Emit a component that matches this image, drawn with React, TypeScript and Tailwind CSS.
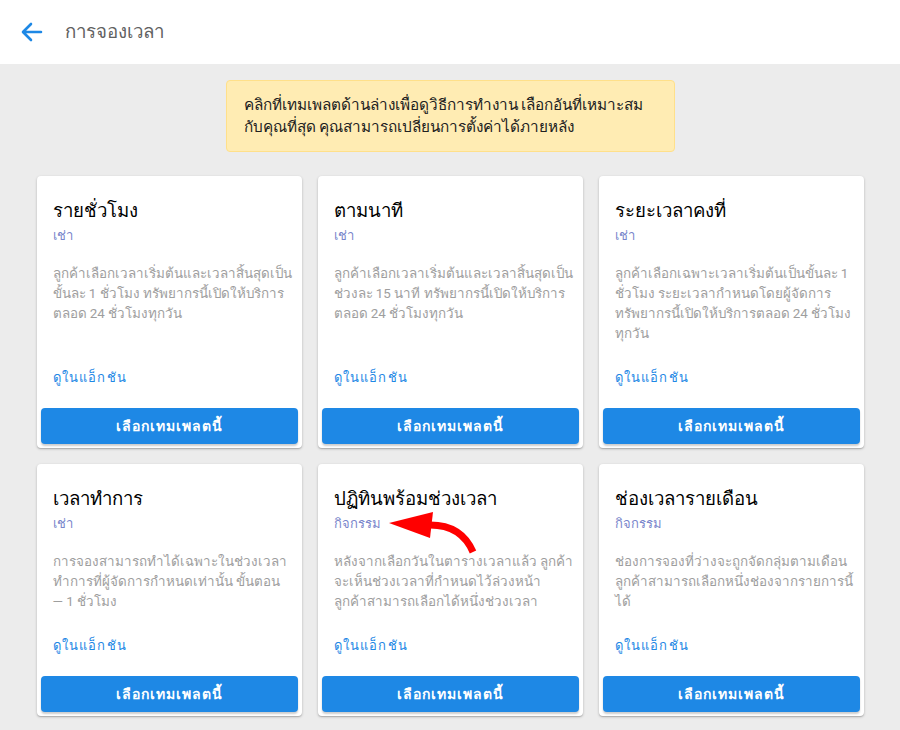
import React from 'react'

type Template = {
  title: string
  kind: string
  lines: string[]
  arrow?: boolean
}

const templates: Template[] = [
  {
    title: 'รายชั่วโมง',
    kind: 'เช่า',
    lines: [
      'ลูกค้าเลือกเวลาเริ่มต้นและเวลาสิ้นสุดเป็น',
      'ขั้นละ 1 ชั่วโมง ทรัพยากรนี้เปิดให้บริการ',
      'ตลอด 24 ชั่วโมงทุกวัน',
    ],
  },
  {
    title: 'ตามนาที',
    kind: 'เช่า',
    lines: [
      'ลูกค้าเลือกเวลาเริ่มต้นและเวลาสิ้นสุดเป็น',
      'ช่วงละ 15 นาที ทรัพยากรนี้เปิดให้บริการ',
      'ตลอด 24 ชั่วโมงทุกวัน',
    ],
  },
  {
    title: 'ระยะเวลาคงที่',
    kind: 'เช่า',
    lines: [
      'ลูกค้าเลือกเฉพาะเวลาเริ่มต้นเป็นขั้นละ 1',
      'ชั่วโมง ระยะเวลากำหนดโดยผู้จัดการ',
      'ทรัพยากรนี้เปิดให้บริการตลอด 24 ชั่วโมง',
      'ทุกวัน',
    ],
  },
  {
    title: 'เวลาทำการ',
    kind: 'เช่า',
    lines: [
      'การจองสามารถทำได้เฉพาะในช่วงเวลา',
      'ทำการที่ผู้จัดการกำหนดเท่านั้น ขั้นตอน',
      '— 1 ชั่วโมง',
    ],
  },
  {
    title: 'ปฏิทินพร้อมช่วงเวลา',
    kind: 'กิจกรรม',
    lines: [
      'หลังจากเลือกวันในตารางเวลาแล้ว ลูกค้า',
      'จะเห็นช่วงเวลาที่กำหนดไว้ล่วงหน้า',
      'ลูกค้าสามารถเลือกได้หนึ่งช่วงเวลา',
    ],
    arrow: true,
  },
  {
    title: 'ช่องเวลารายเดือน',
    kind: 'กิจกรรม',
    lines: [
      'ช่องการจองที่ว่างจะถูกจัดกลุ่มตามเดือน',
      'ลูกค้าสามารถเลือกหนึ่งช่องจากรายการนี้',
      'ได้',
    ],
  },
]

function RedArrow() {
  return (
    <svg
      className="absolute left-0 top-0 pointer-events-none"
      width="200"
      height="120"
      viewBox="0 0 200 120"
    >
      <path d="M 155 88 Q 143 60 110 61" fill="none" stroke="#ff0000" strokeWidth="7" />
      <polygon points="71,59 115,48 112,74" fill="#ff0000" />
    </svg>
  )
}

function TemplateCard({ t }: { t: Template }) {
  return (
    <div className="relative bg-white rounded shadow-[0_1px_3px_rgba(0,0,0,0.2),0_1px_1px_rgba(0,0,0,0.14)] flex flex-col">
      <div className="px-4 pt-[21px] flex-1 flex flex-col">
        <h2 className="text-[18.6px] leading-7 font-medium text-black">{t.title}</h2>
        <div className="mt-px text-[13px] leading-5 text-[#7986cb]">{t.kind}</div>
        <p className="mt-[18px] text-[13.4px] leading-5 text-[#9e9e9e] whitespace-nowrap">
          {t.lines.map((l, i) => (
            <span key={i} className="block">{l}</span>
          ))}
        </p>
        <div className="mt-auto pt-[21px] pb-[15px]">
          <span className="text-[13px] leading-5 font-medium tracking-[1.2px] text-[#1e88e5]">ดูในแอ็กชัน</span>
        </div>
      </div>
      <div className="p-1">
        <button className="w-full h-9 rounded bg-[#1e88e5] text-white text-[14px] font-bold tracking-[1px] shadow-[0_2px_2px_rgba(0,0,0,0.2)]">
          เลือกเทมเพลตนี้
        </button>
      </div>
      {t.arrow && <RedArrow />}
    </div>
  )
}

export default function App() {
  return (
    <div className="min-h-[730px] bg-[#ececec] [font-family:Roboto,sans-serif]">
      <header className="h-16 bg-white flex items-center px-5">
        <svg width="24" height="24" viewBox="0 0 24 24" className="text-[#1e88e5]">
          <path
            d="M21 12H4M11 4l-8 8 8 8"
            fill="none"
            stroke="currentColor"
            strokeWidth="2.6"
            strokeLinecap="round"
            strokeLinejoin="round"
          />
        </svg>
        <h1 className="ml-[21px] text-[18.7px] text-[#616161]">การจองเวลา</h1>
      </header>

      <div className="pt-4 pb-4">
        <div className="mx-auto w-[449px] bg-[#ffecb3] border border-[#ffe08a] rounded px-[17px] py-[13px] text-[15.3px] leading-[22px] text-[#212121]">
          คลิกที่เทมเพลตด้านล่างเพื่อดูวิธีการทำงาน เลือกอันที่เหมาะสม
          <br />
          กับคุณที่สุด คุณสามารถเปลี่ยนการตั้งค่าได้ภายหลัง
        </div>

        <div className="mx-auto mt-6 w-[827px] grid grid-cols-3 gap-4">
          {templates.map((t) => (
            <TemplateCard key={t.title} t={t} />
          ))}
        </div>
      </div>
    </div>
  )
}
